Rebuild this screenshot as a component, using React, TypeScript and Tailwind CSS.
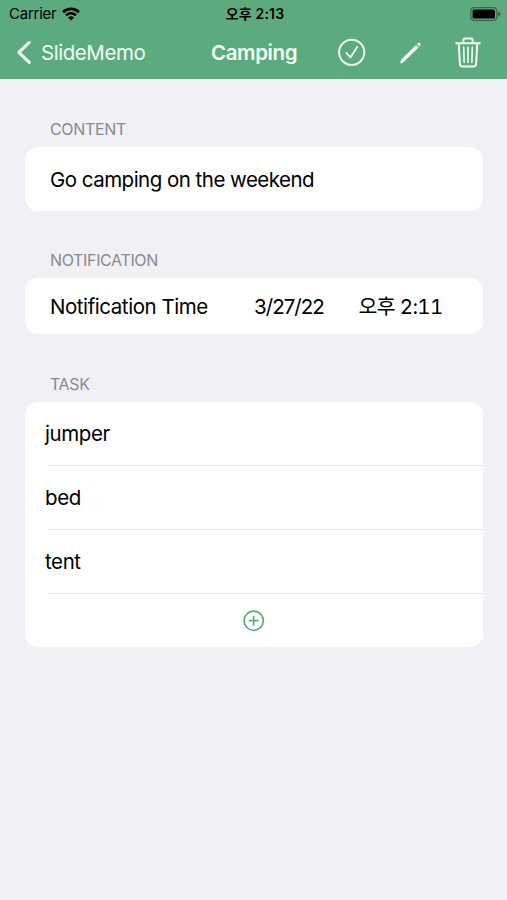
import React from "react";

const TASKS = ["jumper", "bed", "tent"];

const SectionTitle: React.FC<{ children: React.ReactNode }> = ({
  children,
}) => (
  <h2 className="pl-[25px] h-5 text-[16px] leading-5 tracking-[-0.35px] text-[#8a8a8e]">
    {children}
  </h2>
);

const StatusBar = () => (
  <div className="grid grid-cols-3 items-center h-[27px] pl-[9px] pr-[6px] text-black">
    <div className="flex items-center gap-[6px]">
      <span className="text-[15px] leading-5 tracking-[-0.25px]">Carrier</span>
      <svg width="18" height="14" viewBox="0 0 18 14" fill="none">
        <path
          d="M1 5.2a11.5 11.5 0 0 1 16 0"
          stroke="currentColor"
          strokeWidth="2.7"
        />
        <path
          d="M4 8.3a7.3 7.3 0 0 1 10 0"
          stroke="currentColor"
          strokeWidth="2.4"
        />
        <path
          d="M9 13.6 6 10.6a4.3 4.3 0 0 1 6 0z"
          fill="currentColor"
        />
      </svg>
    </div>
    <span className="text-center text-[14px] leading-5 font-semibold tracking-[0.2px] whitespace-nowrap">
      오후 2:13
    </span>
    <svg
      className="justify-self-end"
      width="31"
      height="14"
      viewBox="0 0 31 14"
      fill="none"
    >
      <rect
        x="0.8"
        y="0.6"
        width="26"
        height="12.8"
        rx="3.4"
        stroke="#000"
        strokeOpacity="0.4"
        strokeWidth="1.2"
      />
      <rect x="2.6" y="2.4" width="22.4" height="9.2" rx="1.6" fill="#000" />
      <path d="M28.3 4.6v4.8q2-.8 2-2.4t-2-2.4z" fill="#000" fillOpacity="0.5" />
    </svg>
  </div>
);

const NavBar = () => (
  <nav className="flex items-center h-[52px] pl-4 pr-[26px] text-[#f2fff4]">
    <button className="flex items-center w-[195px] gap-[9px]">
      <svg width="16" height="24" viewBox="0 0 16 24" fill="none">
        <path
          d="M13.3 1.4 2.8 11.4l10.5 10"
          stroke="currentColor"
          strokeWidth="3"
          strokeLinecap="round"
          strokeLinejoin="round"
        />
      </svg>
      <span className="text-[20.5px] leading-6 tracking-[-0.45px]">
        SlideMemo
      </span>
    </button>
    <h1 className="w-[127px] text-[20.5px] leading-6 font-semibold tracking-[-0.4px]">
      Camping
    </h1>
    <div className="flex flex-1 items-center justify-between">
      {/* Done */}
      <svg
        className="mb-0.5"
        width="28"
        height="28"
        viewBox="0 0 28 28"
        fill="none"
      >
        <circle cx="13.7" cy="14.3" r="12.6" stroke="currentColor" strokeWidth="1.9" />
        <path
          d="m8.4 14.9 4 4.6 6.8-10.4"
          stroke="currentColor"
          strokeWidth="1.8"
          strokeLinecap="round"
          strokeLinejoin="round"
        />
      </svg>
      {/* Edit */}
      <svg
        className="mb-px"
        width="24"
        height="24"
        viewBox="0 0 24 24"
        fill="currentColor"
      >
        <path d="M17 3.9 19.5 6.4 5 20.7 2 22.2q-.8.2-.6-.7L2.6 18.2z" />
        <path d="m17.9 3 .7-.7a1.75 1.75 0 0 1 2.6 2.5l-.8.8z" />
      </svg>
      {/* Delete */}
      <svg
        className="mb-px"
        width="26"
        height="31"
        viewBox="0 0 26 31"
        fill="none"
        stroke="currentColor"
        strokeWidth="2"
        strokeLinecap="round"
        strokeLinejoin="round"
      >
        <path d="M1.2 6.2h23.6" />
        <path d="M8.3 6.2V3.6q0-2 2-2h5.4q2 0 2 2v2.6" />
        <path d="m3.7 6.2 1.2 20.7q.2 2.6 2.8 2.6h10.6q2.6 0 2.8-2.6l1.2-20.7" />
        <path d="m8.7 10.2.4 15.2M13 10.2v15.2M17.3 10.2l-.4 15.2" strokeWidth="1.6" />
      </svg>
    </div>
  </nav>
);

export default function App() {
  return (
    <div className="min-h-screen bg-[#f1f0f5] font-['Inter','Noto_Sans_CJK_KR',sans-serif]">
      <header className="bg-[#5cab7f]">
        <StatusBar />
        <NavBar />
      </header>

      <main className="pl-[25px] pr-6 pt-10 text-[20.5px] leading-7 tracking-[-0.4px] text-black">
        <section>
          <SectionTitle>CONTENT</SectionTitle>
          <div className="flex items-center mt-2 h-[63.5px] px-[25px] pt-0.5 rounded-[13px] bg-white tracking-[-0.52px]">
            Go camping on the weekend
          </div>
        </section>

        <section className="mt-[39.5px]">
          <SectionTitle>NOTIFICATION</SectionTitle>
          <div className="flex items-center mt-2 h-14 px-[25px] pt-0.5 rounded-[13px] bg-white">
            <span className="w-[204px] tracking-[-0.44px]">
              Notification Time
            </span>
            <span className="w-[104.5px] tracking-[-0.95px]">3/27/22</span>
            <span className="whitespace-nowrap tabular-nums tracking-[-0.65px]">
              오후 2:11
            </span>
          </div>
        </section>

        <section className="mt-10">
          <SectionTitle>TASK</SectionTitle>
          <div className="mt-2 rounded-[13px] bg-white">
            <ul>
              {TASKS.map((task) => (
                <li key={task}>
                  <div className="flex items-center h-[63px] pl-5 pt-px">
                    {task}
                  </div>
                  <div className="ml-6 h-px bg-[#e6e6e9]" />
                </li>
              ))}
            </ul>
            <button className="flex items-center justify-center w-full h-[53px] pr-px text-[#5cab7f]">
              <svg
                width="22"
                height="22"
                viewBox="0 0 22 22"
                fill="none"
                stroke="currentColor"
                strokeWidth="1.7"
                strokeLinecap="round"
              >
                <circle cx="10.7" cy="10.7" r="9.6" />
                <path d="M10.7 6.5v8.4M6.5 10.7h8.4" />
              </svg>
            </button>
          </div>
        </section>
      </main>
    </div>
  );
}
